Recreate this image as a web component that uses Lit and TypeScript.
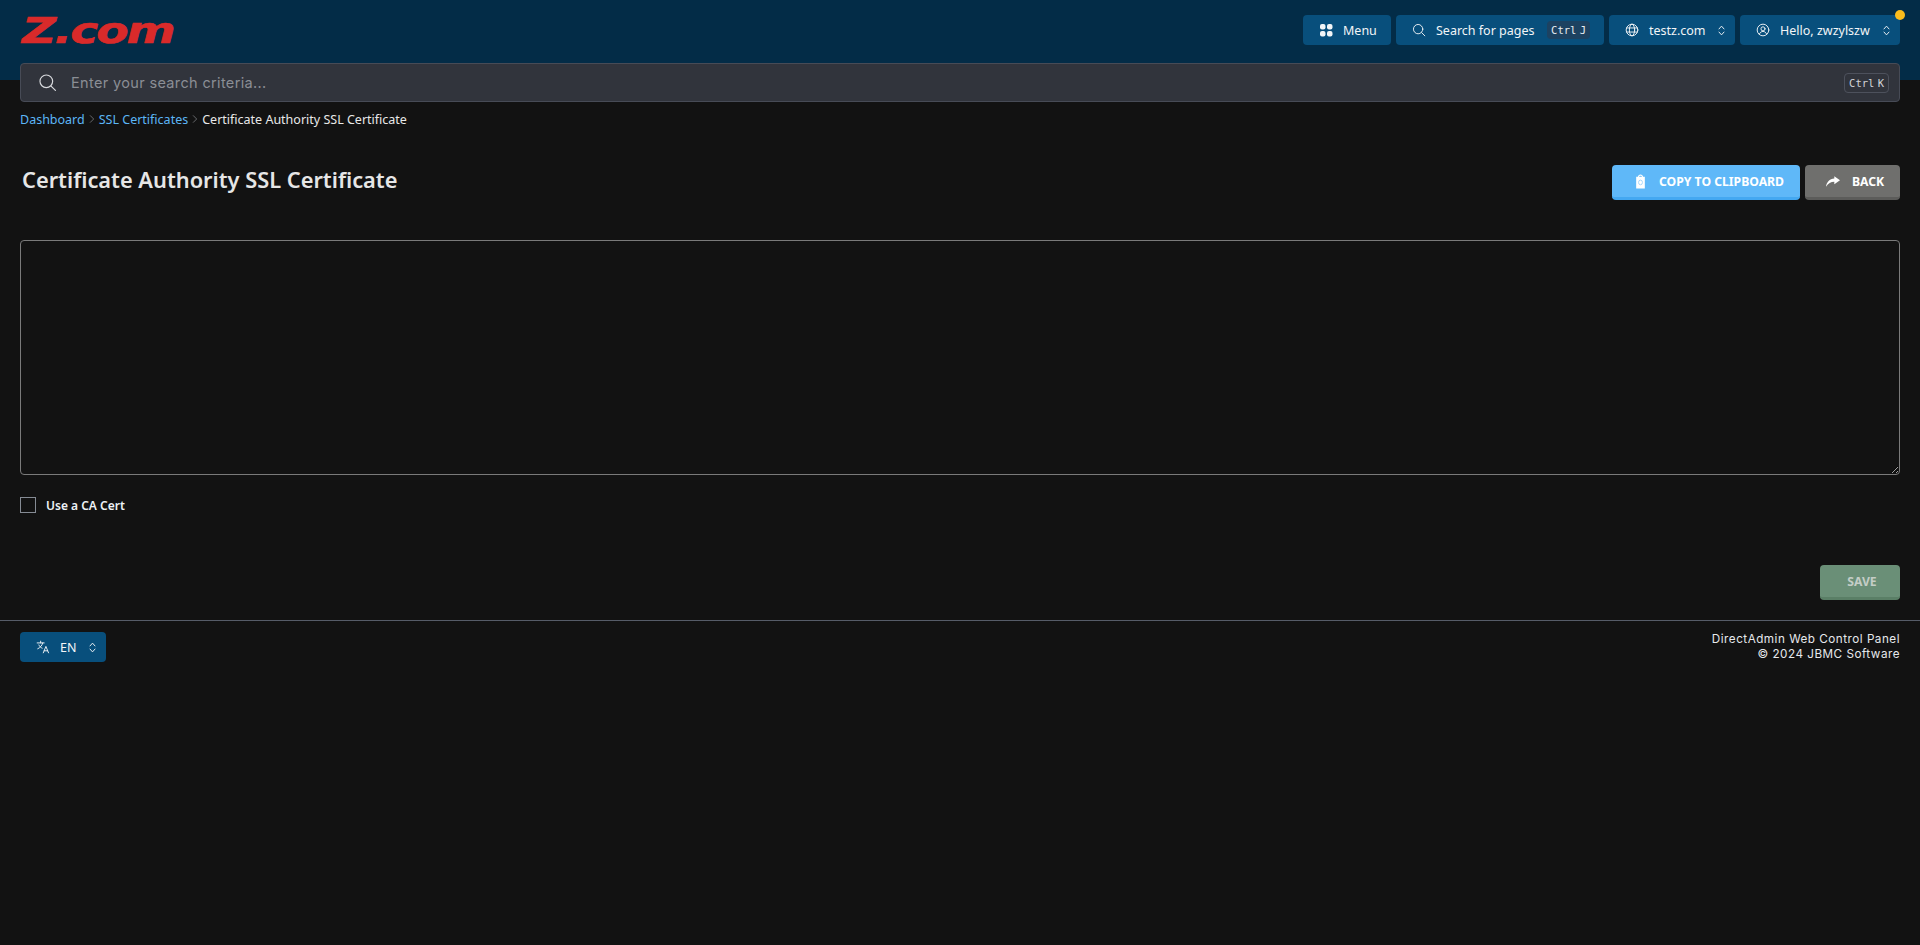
import { LitElement, html, css, svg } from 'lit';
import { customElement } from 'lit/decorators.js';

const icon = (body: unknown, size = 14, sw = 1.6) => html`
  <svg class="icon" width=${size} height=${size} viewBox="0 0 24 24" fill="none" stroke="currentColor" stroke-width=${sw} stroke-linecap="round" stroke-linejoin="round">${body}</svg>
`;

const searchIcon = svg`<circle cx="10.5" cy="10.5" r="8"/><path d="M16.5 16.5 22 22"/>`;
const globeIcon = svg`<circle cx="12" cy="12" r="10"/><ellipse cx="12" cy="12" rx="4.5" ry="10"/><path d="M2.8 8.5h18.4M2.8 15.5h18.4"/>`;
const userIcon = svg`<circle cx="12" cy="12" r="10"/><circle cx="12" cy="10" r="3.5"/><path d="M5.8 19c1.2-3 3.4-4.5 6.2-4.5s5 1.500 6.200 4.500"/>`;
const updownIcon = svg`<path d="M8 9.500 12 5l4 4.500M8 14.500 12 19l4-4.500"/>`;
const translateIcon = svg`<path d="M2 5h12M8 2v3M11.500 5C10.500 9.500 7.500 13 3 15M5 8.500c1 2.500 3 4.500 5.500 5.500M12.500 22l4.500-11 4.500 11M14 18.500h6"/>`;
const caretIcon = svg`<path d="M8 4l8 8-8 8"/>`;

@customElement('app-root')
export class AppRoot extends LitElement {
  static override styles = css`
    :host {
      display: block;
      min-height: 945px;
      background: #121212;
      color: #fff;
      font-family: 'Noto Sans', 'Open Sans', sans-serif;
    }

    .icon {
      flex-shrink: 0;
      display: block;
    }

    .header {
      display: flex;
      flex-direction: column;
      gap: 18px;
      padding: 15px 20px 0;
      background: #032c47;
    }

    .top {
      display: flex;
      align-items: center;
      justify-content: space-between;
      height: 30px;
    }

    .logo {
      display: block;
      width: 155px;
      height: 30px;
      color: #d92a2a;
      font: italic 700 36px/30px 'DejaVu Sans', sans-serif;
      letter-spacing: -1.5px;
      white-space: nowrap;
      -webkit-text-stroke: 0.6px #d92a2a;
      transform: translate(2px, 1px) scaleX(1.31);
      transform-origin: left center;
    }

    .nav {
      display: flex;
      gap: 5px;
    }

    .nav-btn {
      position: relative;
      display: flex;
      align-items: center;
      height: 30px;
      box-sizing: border-box;
      padding: 0 6px 0 16px;
      border-radius: 4px;
      background: #084f7c;
      font-size: 12.5px;
      color: #f2f5f7;
      white-space: nowrap;
    }

    .nav-btn .label {
      flex: 1;
      margin-left: 10px;
    }

    .menu {
      width: 88px;
    }

    .find {
      width: 208px;
    }

    .domain {
      width: 126px;
    }

    .user {
      width: 160px;
    }

    .hint {
      padding: 2px 4px;
      border-radius: 4px;
      background: #1d4261;
      font: 10.5px/14px 'DejaVu Sans Mono', 'Liberation Mono', monospace;
      word-spacing: -3px;
      color: #e8edf2;
    }

    .find .hint {
      margin-right: 8px;
    }

    .dot {
      position: absolute;
      top: -5px;
      right: -5px;
      width: 10px;
      height: 10px;
      border-radius: 50%;
      background: #fbbc1c;
    }

    .search {
      display: flex;
      align-items: center;
      box-sizing: border-box;
      height: 39px;
      margin-bottom: -22px;
      padding: 0 10px 0 17px;
      border: 1px solid #474b56;
      border-radius: 4px;
      background: #31343c;
      color: #d7d9dd;
      position: relative;
    }

    .search .placeholder {
      flex: 1;
      margin-left: 14px;
      font: 14.5px Inter, 'Noto Sans', sans-serif;
      letter-spacing: 0.35px;
      color: #8b8e95;
    }

    .search .hint {
      padding: 2px 4px;
      background: transparent;
      border: 1px solid #4d515c;
      color: #d3d5d9;
    }

    .crumbs {
      display: flex;
      align-items: center;
      gap: 2px;
      height: 18px;
      margin: 30px 20px 0;
      font-size: 12.5px;
      color: #e8e8e8;
    }

    .crumbs a {
      color: #5cb6f6;
    }

    .crumbs .sep {
      color: #77797d;
    }

    .title-row {
      display: flex;
      align-items: flex-start;
      justify-content: space-between;
      margin: 37px 20px 0;
    }

    h1 {
      margin: 0 0 0 2px;
      font-size: 21.8px;
      line-height: 30px;
      font-weight: 600;
      color: #e6e6e6;
    }

    .actions {
      display: flex;
      gap: 5px;
    }

    .btn {
      display: flex;
      align-items: center;
      justify-content: center;
      box-sizing: border-box;
      height: 35px;
      border-radius: 4px;
      border-bottom: 3px solid;
      font-size: 12.2px;
      font-weight: 700;
      color: #fff;
    }

    .copy {
      width: 188px;
      gap: 13px;
      padding-left: 7px;
      background: #5fb8f8;
      border-color: #44a8f1;
    }

    .back {
      width: 95px;
      gap: 12px;
      padding-left: 5px;
      background: #6f6f6d;
      border-color: #5c5c5a;
    }

    .save {
      width: 80px;
      padding-left: 4px;
      background: #6a8f77;
      border-color: #5a7f66;
      color: #c4cdc6;
    }

    textarea {
      display: block;
      box-sizing: border-box;
      width: calc(100% - 40px);
      height: 235px;
      margin: 40px 20px 0;
      border: 1px solid #7a7a7a;
      border-radius: 4px;
      background: transparent;
      color: #fff;
      outline: none;
      color-scheme: dark;
    }

    .check {
      display: flex;
      align-items: center;
      gap: 10px;
      margin: 22px 20px 0;
      height: 16px;
      font-size: 12px;
      font-weight: 600;
      color: #eef2f6;
    }

    .box {
      box-sizing: border-box;
      width: 16px;
      height: 16px;
      border: 1px solid #858b94;
    }

    .save-row {
      display: flex;
      justify-content: flex-end;
      margin: 52px 20px 0;
    }

    .footer {
      display: flex;
      align-items: flex-start;
      justify-content: space-between;
      margin-top: 20px;
      padding: 11px 20px 0;
      border-top: 1px solid #565c68;
    }

    .lang {
      display: flex;
      align-items: center;
      box-sizing: border-box;
      width: 86px;
      height: 30px;
      padding: 0 6px 0 16px;
      border-radius: 4px;
      background: #084f7c;
      font-size: 12.5px;
      color: #f2f5f7;
    }

    .lang .label {
      flex: 1;
      margin-left: 10px;
    }

    .copyright {
      font: 400 11.7px/14.5px Inter, 'Noto Sans', sans-serif;
      letter-spacing: 0.5px;
      text-align: right;
      color: #e6e8ec;
    }
  `;

  private chevron() {
    return html`<span class="chevron">${icon(updownIcon, 15, 1.5)}</span>`;
  }

  private sep() {
    return html`<span class="sep">${icon(caretIcon, 10, 2)}</span>`;
  }

  protected override render() {
    return html`
      <div class="header">
        <div class="top">
          <span class="logo">Z.com</span>
          <div class="nav">
            <div class="nav-btn menu">
              <svg class="icon" width="14" height="14" viewBox="0 0 14 14" fill="currentColor">
                <rect x="1" y="1" width="5.500" height="5.500" rx="2"/>
                <rect x="8" y="1" width="5.500" height="5.500" rx="2"/>
                <rect x="1" y="8" width="5.500" height="5.500" rx="2"/>
                <rect x="8" y="8" width="5.500" height="5.500" rx="2"/>
              </svg>
              <span class="label">Menu</span>
            </div>
            <div class="nav-btn find">
              ${icon(searchIcon)}
              <span class="label">Search for pages</span>
              <span class="hint">Ctrl J</span>
            </div>
            <div class="nav-btn domain">
              ${icon(globeIcon)}
              <span class="label">testz.com</span>
              ${this.chevron()}
            </div>
            <div class="nav-btn user">
              ${icon(userIcon)}
              <span class="label">Hello, zwzylszw</span>
              ${this.chevron()}
              <span class="dot"></span>
            </div>
          </div>
        </div>
        <div class="search">
          ${icon(searchIcon, 19, 1.500)}
          <span class="placeholder">Enter your search criteria...</span>
          <span class="hint">Ctrl K</span>
        </div>
      </div>

      <div class="crumbs">
        <a>Dashboard</a>
        ${this.sep()}
        <a>SSL Certificates</a>
        ${this.sep()}
        <span>Certificate Authority SSL Certificate</span>
      </div>

      <div class="title-row">
        <h1>Certificate Authority SSL Certificate</h1>
        <div class="actions">
          <div class="btn copy">
            <svg class="icon" width="11" height="15" viewBox="0 0 14 16" preserveAspectRatio="none" fill="#fff">
              <path d="M1.500 3h2.200c.2-1.500 1.500-2.500 3.300-2.500s3.100 1 3.300 2.500h2.200v12.500h-11zM5 3h4c-.2-.8-1-1.200-2-1.200S5.200 2.200 5 3z"/>
              <circle cx="7" cy="9" r="2.500" fill="none" stroke="#9dd2fa"/>
            </svg>
            <span>COPY TO CLIPBOARD</span>
          </div>
          <div class="btn back">
            <svg class="icon" width="14" height="11" viewBox="0 0 16 12" fill="#fff">
              <path d="M9.500 0 16 4.500 9.500 9V6.200C5.500 6.200 2.500 7.800 0 12c.8-5.500 4-9 9.500-9.500z"/>
            </svg>
            <span>BACK</span>
          </div>
        </div>
      </div>

      <textarea></textarea>

      <div class="check">
        <span class="box"></span>
        <span>Use a CA Cert</span>
      </div>

      <div class="save-row">
        <div class="btn save">SAVE</div>
      </div>

      <div class="footer">
        <div class="lang">
          ${icon(translateIcon)}
          <span class="label">EN</span>
          ${this.chevron()}
        </div>
        <div class="copyright">
          DirectAdmin Web Control Panel<br />
          © 2024 JBMC Software
        </div>
      </div>
    `;
  }
}
